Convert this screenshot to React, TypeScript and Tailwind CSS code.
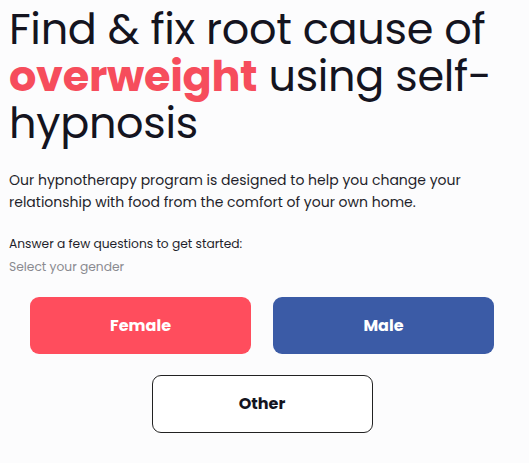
import React from "react";

const font = { fontFamily: '"Poppins", "Open Sans", "Liberation Sans", sans-serif' };

export default function App() {
  return (
    <div className="min-h-screen bg-[#fcfcfd] text-[#14141f]" style={font}>
      <div className="px-[9px] pt-[6px]">
        <h1 className="text-[43px] leading-[47px] font-normal tracking-[-0.3px]">
          Find &amp; fix root cause of <span className="font-bold text-[#f64d5c]">overweight</span> using self-hypnosis
        </h1>
        <p className="mt-[22px] text-[14px] leading-[22px] text-[#1f1f2b]">
          Our hypnotherapy program is designed to help you change your relationship with food from the comfort of your own home.
        </p>
        <p className="mt-[20px] text-[12.25px] leading-[22px] text-[#1f1f2b]">Answer a few questions to get started:</p>
        <p className="mt-[1px] text-[12.25px] leading-[22px] text-[#8a8a90]">Select your gender</p>
      </div>
      <div className="mt-[19px] flex w-[524px] flex-col items-center gap-[21px]">
        <div className="flex gap-[22px]">
          <button className="h-[57px] w-[221px] rounded-[9px] bg-[#ff4d5d] text-[16px] font-bold text-white">
            Female
          </button>
          <button className="h-[57px] w-[221px] rounded-[9px] bg-[#3b5ba6] text-[16px] font-bold text-white">
            Male
          </button>
        </div>
        <button className="h-[58px] w-[221px] rounded-[9px] border border-[#222] bg-white text-[16px] font-bold text-[#14141f]">
          Other
        </button>
      </div>
    </div>
  );
}
